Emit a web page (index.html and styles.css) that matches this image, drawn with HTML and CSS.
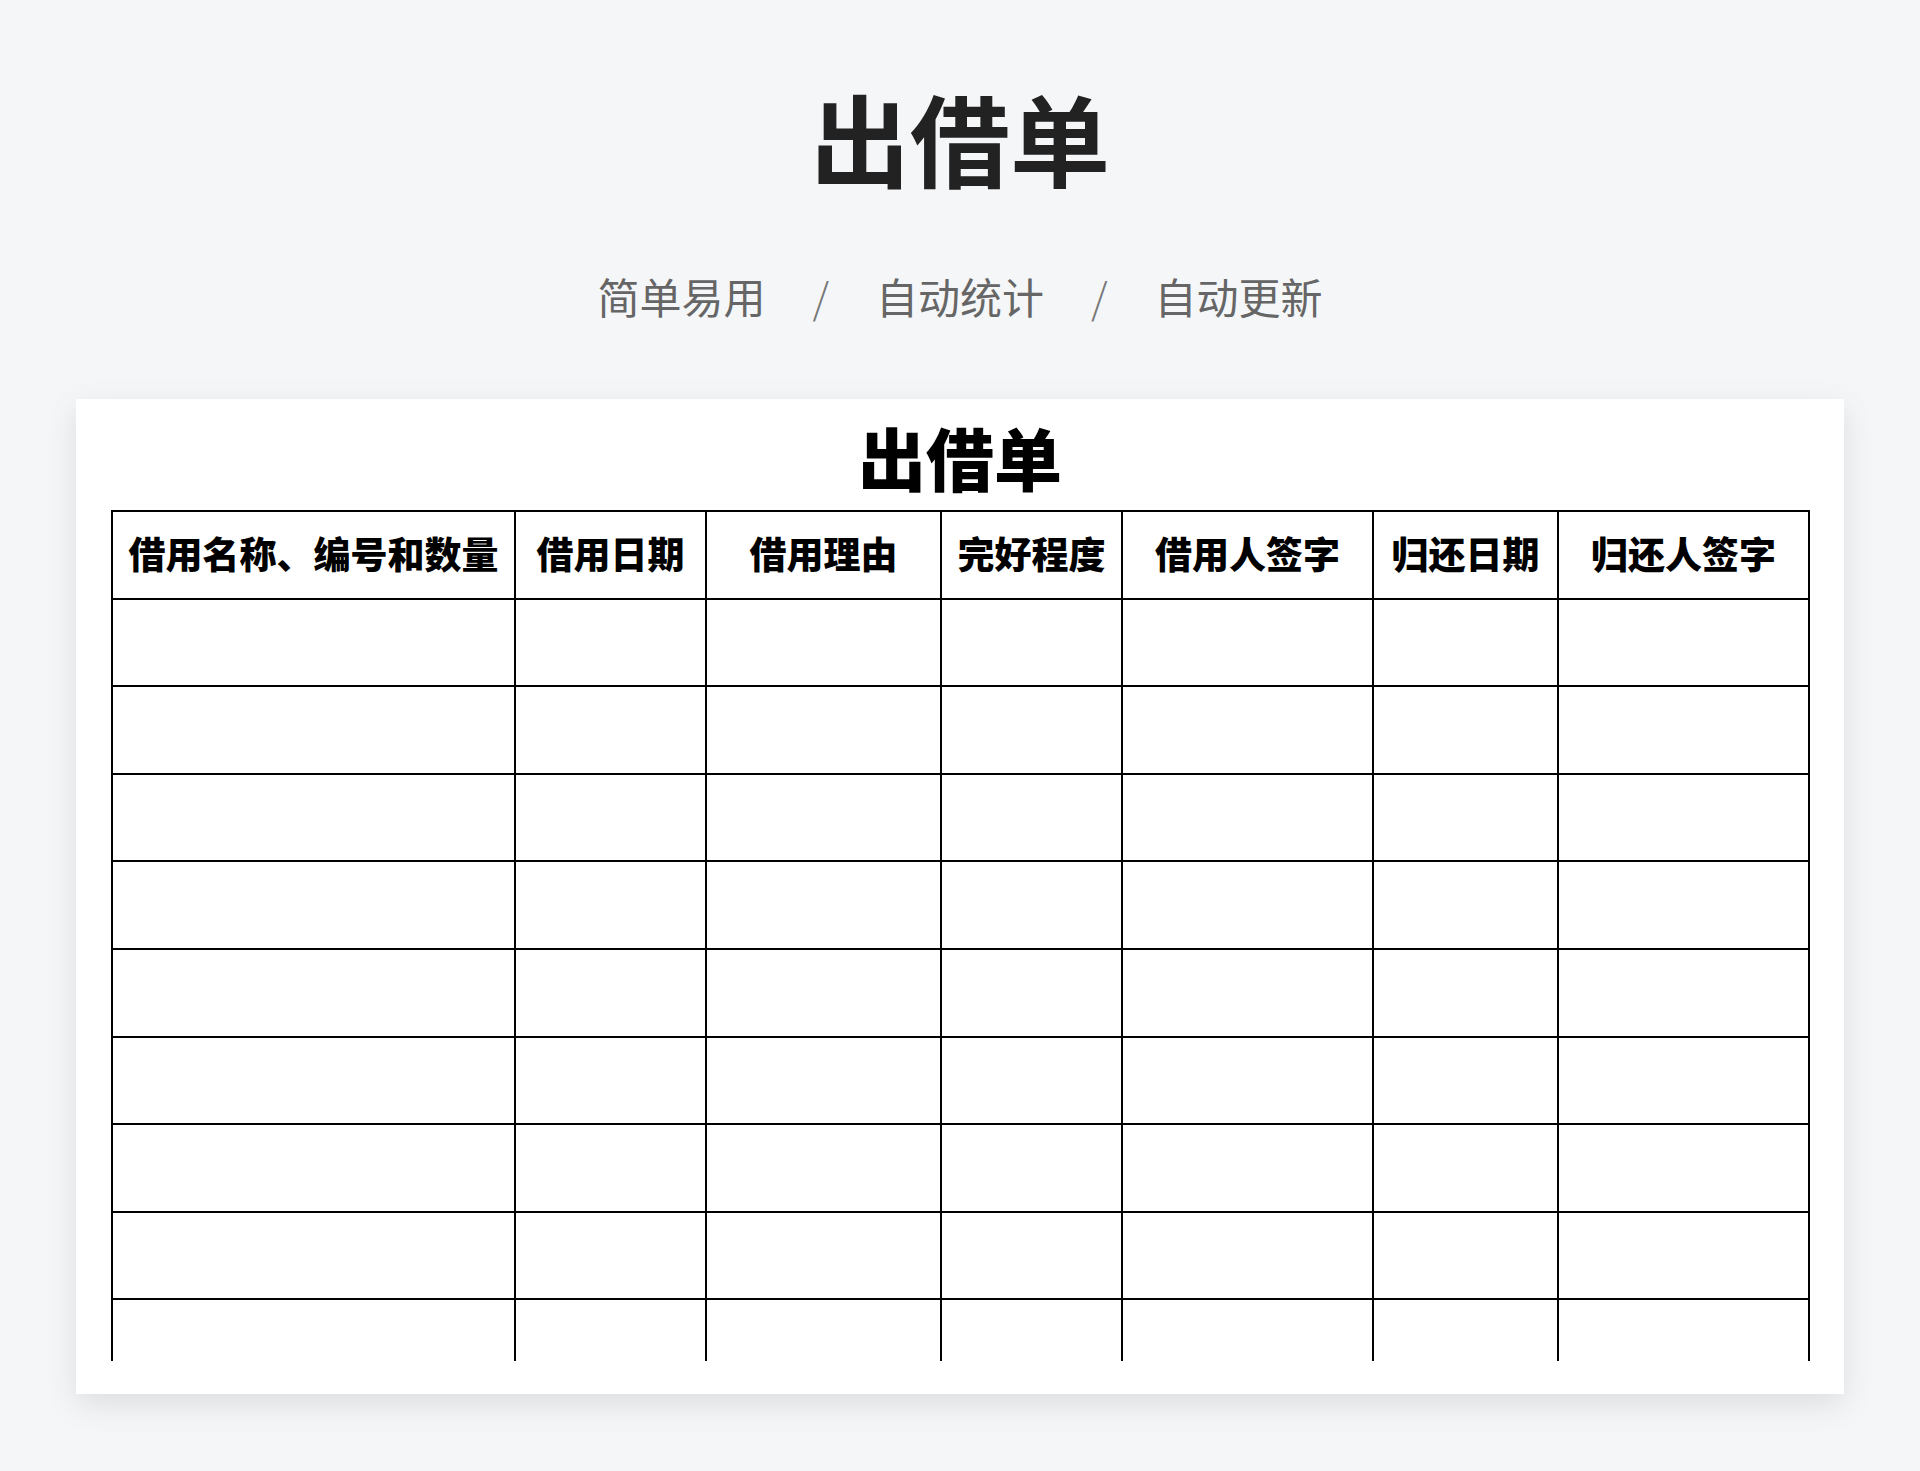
FILE: index.html
```html
<!DOCTYPE html>
<html lang="zh-CN">
<head>
<meta charset="utf-8">
<title>出借单</title>
<link rel="stylesheet" href="styles.css">
</head>
<body>
<header class="hero">
  <h1 class="hero-title">出借单</h1>
  <p class="hero-tags">
    <span class="tag">简单易用</span><span class="sep">/</span><span class="tag">自动统计</span><span class="sep">/</span><span class="tag">自动更新</span>
  </p>
</header>
<main class="card">
  <h2 class="sheet-title">出借单</h2>
  <div class="sheet-wrap">
    <table class="sheet">
      <colgroup>
        <col class="c1"><col class="c2"><col class="c3"><col class="c4"><col class="c5"><col class="c6"><col class="c7">
      </colgroup>
      <thead>
        <tr>
          <th>借用名称、编号和数量</th>
          <th>借用日期</th>
          <th>借用理由</th>
          <th>完好程度</th>
          <th>借用人签字</th>
          <th>归还日期</th>
          <th>归还人签字</th>
        </tr>
      </thead>
      <tbody>
        <tr><td></td><td></td><td></td><td></td><td></td><td></td><td></td></tr>
        <tr><td></td><td></td><td></td><td></td><td></td><td></td><td></td></tr>
        <tr><td></td><td></td><td></td><td></td><td></td><td></td><td></td></tr>
        <tr><td></td><td></td><td></td><td></td><td></td><td></td><td></td></tr>
        <tr><td></td><td></td><td></td><td></td><td></td><td></td><td></td></tr>
        <tr><td></td><td></td><td></td><td></td><td></td><td></td><td></td></tr>
        <tr><td></td><td></td><td></td><td></td><td></td><td></td><td></td></tr>
        <tr><td></td><td></td><td></td><td></td><td></td><td></td><td></td></tr>
        <tr><td></td><td></td><td></td><td></td><td></td><td></td><td></td></tr>
      </tbody>
    </table>
  </div>
</main>
</body>
</html>
```
FILE: styles.css
```css
html, body {
  margin: 0;
  padding: 0;
}
body {
  background: #f5f6f8;
  font-family: "Noto Sans CJK SC", "Noto Sans", sans-serif;
  min-height: 1471px;
}
.hero {
  display: flex;
  flex-direction: column;
  align-items: center;
  padding-top: 87px;
}
.hero-title {
  margin: 0;
  font-size: 100px;
  line-height: 1;
  font-weight: 700;
  color: #222222;
}
.hero-tags {
  margin: 88px 0 0;
  display: flex;
  align-items: center;
  font-size: 42px;
  line-height: 1;
  color: #666666;
}
.sep {
  padding: 0 47px;
  font-weight: 300;
  color: #777777;
}
.card {
  width: 1768px;
  margin: 82px auto 0;
  box-sizing: border-box;
  background: #ffffff;
  padding: 24px 35px 33px;
  box-shadow: 0 10px 30px rgba(0, 0, 0, 0.1);
}
.sheet-title {
  margin: 0;
  text-align: center;
  font-size: 68px;
  line-height: 1;
  font-weight: 900;
  color: #000000;
}
.sheet-wrap {
  margin: 19px -6px 0;
  padding: 0 6px;
  height: 851px;
  overflow: hidden;
}
.sheet {
  width: 1697px;
  border-collapse: collapse;
  table-layout: fixed;
}
.c1 { width: 403px; }
.c2 { width: 191px; }
.c3 { width: 235px; }
.c4 { width: 181px; }
.c5 { width: 251px; }
.c6 { width: 185px; }
.c7 { width: 251px; }
.sheet th,
.sheet td {
  border: 2px solid #000000;
  height: 87.6px;
  padding: 0;
  box-sizing: border-box;
}
.sheet th {
  font-size: 37px;
  font-weight: 900;
  color: #000000;
  text-align: center;
  vertical-align: middle;
  white-space: nowrap;
  padding-bottom: 3px;
}
```
